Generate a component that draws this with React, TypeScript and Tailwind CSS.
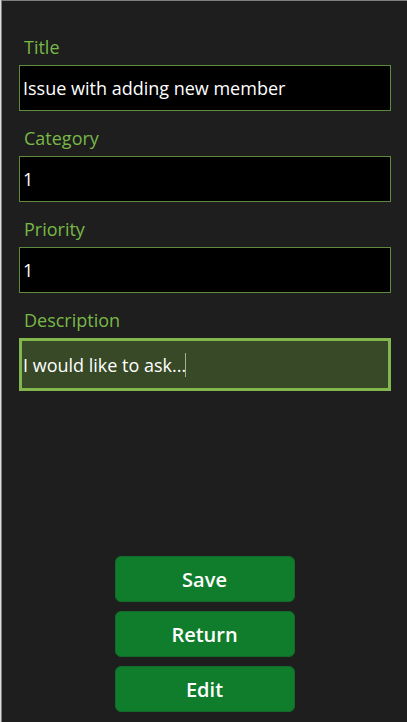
import React, { useState } from "react";

const fieldClass =
  "block w-full border border-[#5d8a3b] bg-black px-[3px] text-lg text-white outline-none h-[46px]";
const activeFieldClass =
  "block w-full border-3 border-[#82b74e] bg-[#374926] px-px text-lg text-white outline-none caret-transparent h-[53px]";

const fields = [
  { id: "title", label: "Title", value: "Issue with adding new member" },
  { id: "category", label: "Category", value: "1" },
  { id: "priority", label: "Priority", value: "1" },
  { id: "description", label: "Description", value: "I would like to ask...", active: true },
];

function Field({ id, label, value, active }: { id: string; label: string; value: string; active?: boolean }) {
  const [text, setText] = useState(value);
  return (
    <div className="flex flex-col gap-1.5">
      <label htmlFor={id} className="px-[5px] text-lg leading-6 text-[#78b846]">
        {label}
      </label>
      <div className="relative">
        <input
          id={id}
          type="text"
          value={text}
          onChange={(e) => setText(e.target.value)}
          className={active ? activeFieldClass : fieldClass}
        />
        {active && <span className="absolute top-[15px] left-[166px] h-6 w-px bg-[#a5b08f]" />}
      </div>
    </div>
  );
}

export default function App() {
  return (
    <div className="min-h-screen border-l border-[#dcdedd] bg-[#1e1e1e] font-['Open_Sans',sans-serif]">
      <form
        onSubmit={(e) => e.preventDefault()}
        className="flex min-h-screen flex-col justify-between border-t border-l border-[#7d807f] pt-[34px] pb-2.5"
      >
        <div className="flex flex-col gap-[15px] pr-4 pl-[17px]">
          {fields.map((f) => (
            <Field key={f.id} {...f} />
          ))}
        </div>
        <div className="flex flex-col items-center gap-[9px]">
          {["Save", "Return", "Edit"].map((name) => (
            <button
              key={name}
              type="button"
              className="h-[46px] w-[180px] rounded-md border border-[#126b29] bg-[#0f7d2b] pt-0.5 text-xl font-semibold text-white"
            >
              {name}
            </button>
          ))}
        </div>
      </form>
    </div>
  );
}
